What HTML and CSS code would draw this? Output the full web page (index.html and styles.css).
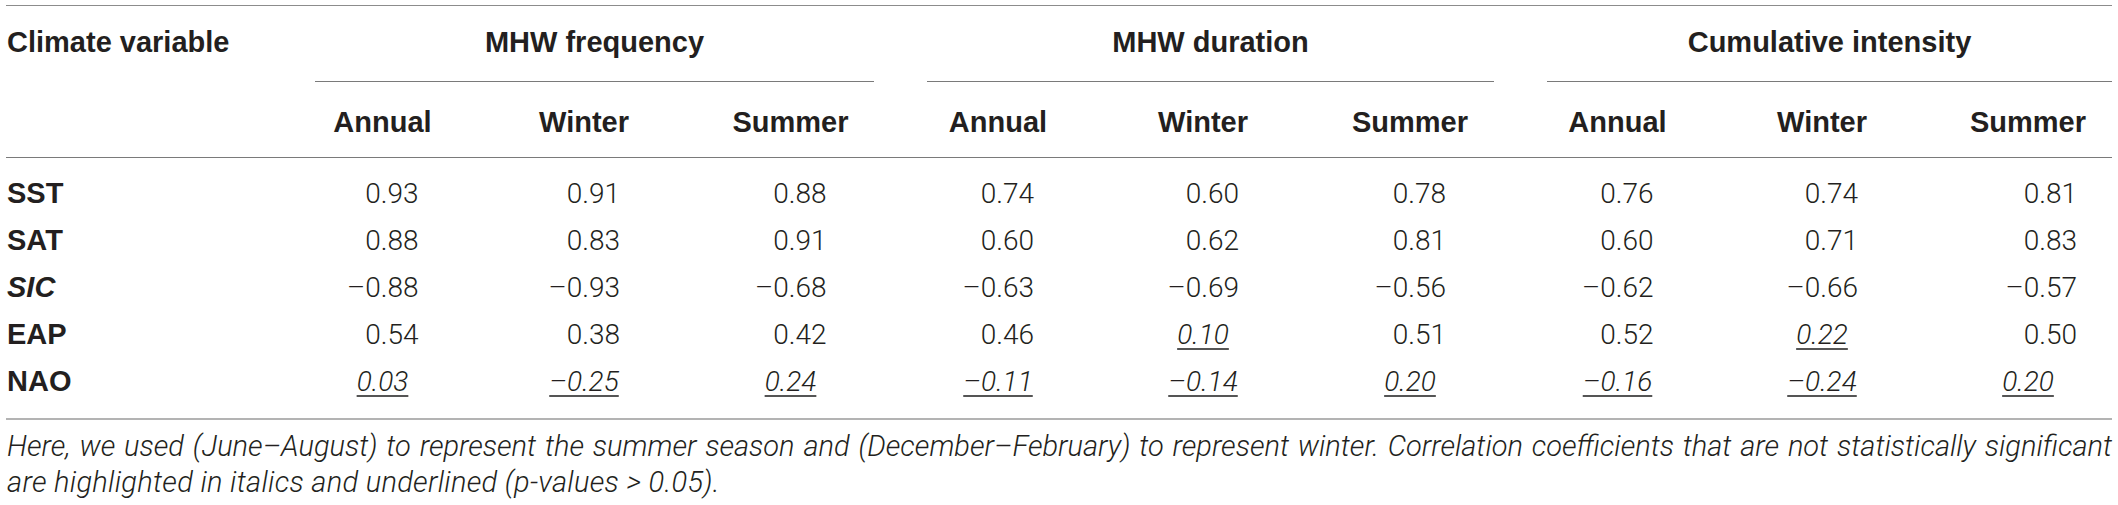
FILE: index.html
```
<!DOCTYPE html>
<html lang="en">
<head>
  <meta charset="UTF-8">
  <title>Climate variables and MHW correlations</title>
  <link rel="stylesheet" href="styles.css">
</head>
<body>
  <div class="tbl">
    <div class="row head-top">
      <div class="stub">Climate variable</div>
      <div class="group"><span>MHW frequency</span></div>
      <div class="group"><span>MHW duration</span></div>
      <div class="group last"><span>Cumulative intensity</span></div>
    </div>

    <div class="row head-sub">
      <div class="stub"></div>
      <div class="cell">Annual</div>
      <div class="cell">Winter</div>
      <div class="cell">Summer</div>
      <div class="cell">Annual</div>
      <div class="cell">Winter</div>
      <div class="cell">Summer</div>
      <div class="cell">Annual</div>
      <div class="cell">Winter</div>
      <div class="cell end">Summer</div>
    </div>

    <div class="body">
      <div class="row">
        <div class="stub">SST</div>
        <div class="cell"><span class="num">0.93</span></div>
        <div class="cell"><span class="num">0.91</span></div>
        <div class="cell"><span class="num">0.88</span></div>
        <div class="cell"><span class="num">0.74</span></div>
        <div class="cell"><span class="num">0.60</span></div>
        <div class="cell"><span class="num">0.78</span></div>
        <div class="cell"><span class="num">0.76</span></div>
        <div class="cell"><span class="num">0.74</span></div>
        <div class="cell end"><span class="num shift">0.81</span></div>
      </div>
      <div class="row">
        <div class="stub">SAT</div>
        <div class="cell"><span class="num">0.88</span></div>
        <div class="cell"><span class="num">0.83</span></div>
        <div class="cell"><span class="num">0.91</span></div>
        <div class="cell"><span class="num">0.60</span></div>
        <div class="cell"><span class="num">0.62</span></div>
        <div class="cell"><span class="num">0.81</span></div>
        <div class="cell"><span class="num">0.60</span></div>
        <div class="cell"><span class="num">0.71</span></div>
        <div class="cell end"><span class="num shift">0.83</span></div>
      </div>
      <div class="row">
        <div class="stub"><i>SIC</i></div>
        <div class="cell"><span class="num">–0.88</span></div>
        <div class="cell"><span class="num">–0.93</span></div>
        <div class="cell"><span class="num">–0.68</span></div>
        <div class="cell"><span class="num">–0.63</span></div>
        <div class="cell"><span class="num">–0.69</span></div>
        <div class="cell"><span class="num">–0.56</span></div>
        <div class="cell"><span class="num">–0.62</span></div>
        <div class="cell"><span class="num">–0.66</span></div>
        <div class="cell end"><span class="num shift">–0.57</span></div>
      </div>
      <div class="row">
        <div class="stub">EAP</div>
        <div class="cell"><span class="num">0.54</span></div>
        <div class="cell"><span class="num">0.38</span></div>
        <div class="cell"><span class="num">0.42</span></div>
        <div class="cell"><span class="num">0.46</span></div>
        <div class="cell"><span class="ns">0.10</span></div>
        <div class="cell"><span class="num">0.51</span></div>
        <div class="cell"><span class="num">0.52</span></div>
        <div class="cell"><span class="ns">0.22</span></div>
        <div class="cell end"><span class="num shift">0.50</span></div>
      </div>
      <div class="row">
        <div class="stub">NAO</div>
        <div class="cell"><span class="ns">0.03</span></div>
        <div class="cell"><span class="ns">–0.25</span></div>
        <div class="cell"><span class="ns">0.24</span></div>
        <div class="cell"><span class="ns">–0.11</span></div>
        <div class="cell"><span class="ns">–0.14</span></div>
        <div class="cell"><span class="ns">0.20</span></div>
        <div class="cell"><span class="ns">–0.16</span></div>
        <div class="cell"><span class="ns">–0.24</span></div>
        <div class="cell end"><span class="ns">0.20</span></div>
      </div>
    </div>
  </div>

  <div class="note">
    <p class="full">Here, we used (June–August) to represent the summer season and (December–February) to represent winter. Correlation coefficients that are not statistically significant</p>
    <p class="rest">are highlighted in italics and underlined (p-values &gt; 0.05).</p>
  </div>
</body>
</html>
```

FILE: styles.css
```
* { margin: 0; padding: 0; box-sizing: border-box; }
body {
  background: #fff;
  color: #231f20;
  padding: 5px 6px 0 6px;
  font-family: 'Roboto', 'Liberation Sans', sans-serif;
}
.tbl {
  width: 2106px;
  border-top: 1px solid #8c8c8c;
  border-bottom: 2px solid #b3b3b3;
}
.row {
  display: grid;
  grid-template-columns: 277px 199px 204px 209px 206px 204px 210px 205px 204px 188px;
  align-items: center;
}
.head-top,
.head-sub {
  font-family: 'Liberation Sans', Arial, sans-serif;
  font-weight: bold;
  font-size: 29px;
  line-height: 34px;
}
.head-top .stub {
  padding: 19px 0 23px 1px;
  align-self: start;
}
.group {
  grid-column: span 3;
  margin: 0 21px 0 32px;
  padding: 19px 0 22px;
  border-bottom: 1px solid #7a7a7a;
  text-align: center;
}
.group.last { margin-right: 0; }
.head-sub {
  height: 76px;
  padding-top: 5px;
  border-bottom: 1px solid #7a7a7a;
}
.head-sub .cell { text-align: center; }
.cell.end { padding-left: 20px; }

.body { padding: 12px 0 13px; }
.body .row {
  height: 47px;
  font-size: 28px;
  font-weight: 300;
}
.body .stub {
  font-family: 'Liberation Sans', Arial, sans-serif;
  font-weight: bold;
  font-size: 29px;
  padding-left: 1px;
}
.body .cell { text-align: center; }
.num {
  display: inline-block;
  width: 72px;
  text-align: right;
}
.num.shift { margin-left: 26px; }
.ns {
  font-style: italic;
  text-decoration: underline;
  text-decoration-thickness: 2px;
  text-underline-offset: 4px;
  text-decoration-color: #555;
}

.note {
  width: 2106px;
  padding: 8px 0 0 1px;
  font-size: 29px;
  font-weight: 300;
  font-style: italic;
  line-height: 36px;
}
.note .full {
  text-align: justify;
  text-align-last: justify;
}
.note .rest { letter-spacing: 0.3px; }
```
